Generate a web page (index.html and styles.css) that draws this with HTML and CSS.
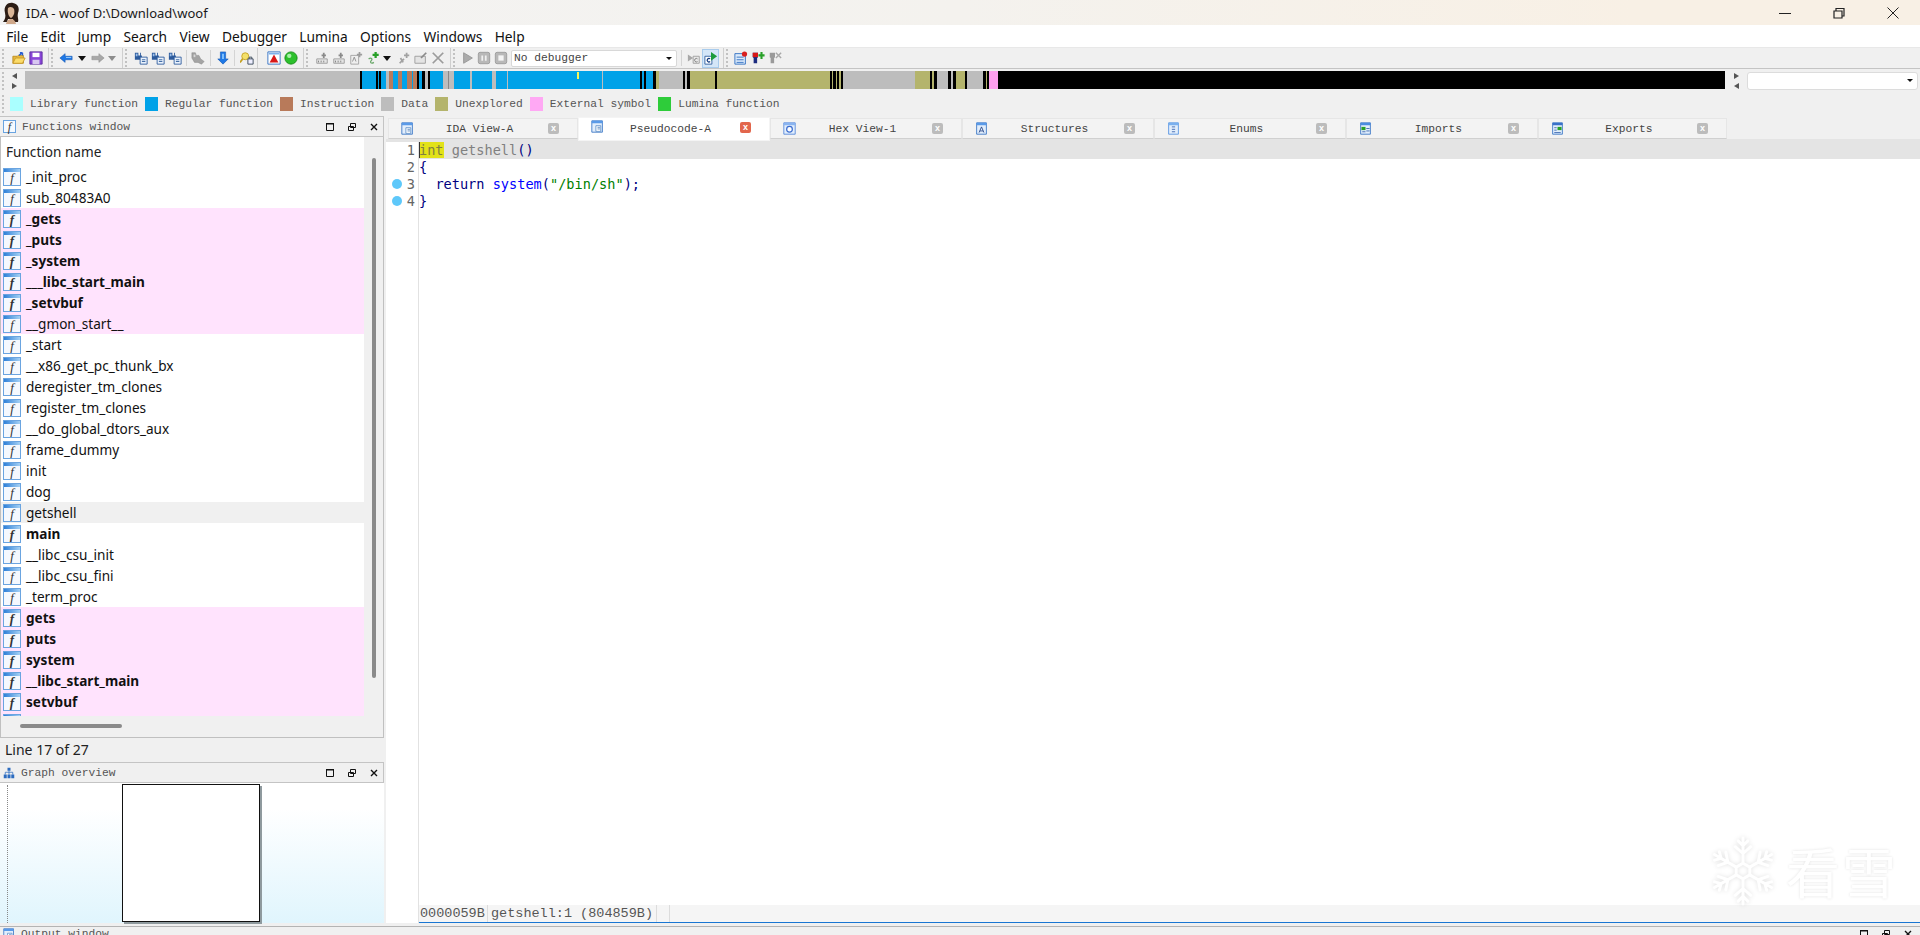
FILE: index.html
```html
<!DOCTYPE html>
<html lang="en">
<head>
    <meta charset="UTF-8">
    <title>IDA - woof D:\Download\woof</title>
    <link rel="stylesheet" href="styles.css">
</head>
<body>

<svg class="sprite" width="0" height="0">
    <defs>
        <symbol id="i-open" viewBox="0 0 16 16"><path d="M1 6h5l1-1h6v9H1z" fill="#e8b93c" stroke="#b98a1e"/><path d="M1 14l3-6h11l-3 6z" fill="#fbdc6a" stroke="#c8982a"/><path d="M8 5l4-3M12 2l-3 0M12 2l0 3" stroke="#2a5fd0" stroke-width="1.6" fill="none"/></symbol>
        <symbol id="i-save" viewBox="0 0 16 16"><path d="M1 1h14v14H1z" fill="#8a46d8" stroke="#5a2a9c"/><path d="M4 2h8v5H4z" fill="#fff"/><path d="M4 10h8v5H4z" fill="#d8c8f0"/></symbol>
        <symbol id="i-back" viewBox="0 0 16 16"><path d="M1 8l6-5v3h8v4H7v3z" fill="#1e78e6" stroke="#1250a8" stroke-width=".6"/><path d="M8 7h6v1H8z" fill="#9cd0ff"/></symbol>
        <symbol id="i-fwd" viewBox="0 0 16 16"><path d="M15 8l-6-5v3H1v4h8v3z" fill="#a8a8a8" stroke="#8c8c8c" stroke-width=".6"/></symbol>
        <symbol id="i-bino" viewBox="0 0 16 16"><path d="M1 2h4v3h2V2h1v3h1v5H1z" fill="#2c5a9c"/><path d="M2 3h2v3H2z" fill="#9cc0ec"/><path d="M7 7h8v8H7z" fill="#eaf2fc" stroke="#2c5a9c"/><path d="M9 10h4M9 12h4" stroke="#2c5a9c"/></symbol>
        <symbol id="i-bino-gray" viewBox="0 0 16 16"><path d="M1 2h4l1 3h3l2 4 4 3-3 3-4-2H4L1 8z" fill="#a4a4a4" stroke="#8a8a8a" stroke-width=".6"/><path d="M3 4h2v3H3z" fill="#d8d8d8"/></symbol>
        <symbol id="i-down" viewBox="0 0 16 16"><path d="M8 15l-6-6h3V1h6v8h3z" fill="#1e78e6" stroke="#1250a8" stroke-width=".6"/><path d="M7 3h2v6H7z" fill="#8cc8ff"/></symbol>
        <symbol id="i-lock" viewBox="0 0 16 16"><circle cx="6" cy="6" r="4" fill="#f4e06a" stroke="#c4a020"/><path d="M3 9L0 13" stroke="#c4a020" stroke-width="2"/><path d="M9 9h6v6H9z" fill="#eef" stroke="#345"/><path d="M10.500 9V7h3v2" fill="none" stroke="#345"/></symbol>
        <symbol id="i-graph" viewBox="0 0 16 16"><path d="M1 1h14v14H1z" fill="#fff" stroke="#2c6cc0"/><path d="M2 2h12v2H2z" fill="#7cb0ea"/><path d="M8 4l5 9H3z" fill="#d81818"/></symbol>
        <symbol id="i-green" viewBox="0 0 16 16"><circle cx="8" cy="8" r="7" fill="#2cc02c" stroke="#148a14"/><circle cx="6" cy="5.500" r="2.500" fill="#a8f0a8"/></symbol>
        <symbol id="i-gear" viewBox="0 0 16 16"><path d="M2 9h12v5H2z" fill="#e4e4e4" stroke="#9a9a9a"/><path d="M4 11v2M7 11v2M10 11v2" stroke="#7a7a7a"/><path d="M10 2v6M7.500 5h5" stroke="#8a8a8a" stroke-width="2"/></symbol>
        <symbol id="i-doc" viewBox="0 0 16 16"><path d="M2 5h9v10H2z" fill="#efefef" stroke="#a0a0a0"/><path d="M4 12l2-5 2 5" fill="none" stroke="#8a8a8a"/><path d="M12 1v6M9 4h6" stroke="#9c9c9c" stroke-width="2"/></symbol>
        <symbol id="i-plus" viewBox="0 0 16 16"><path d="M11 1v7M7.500 4.500h7" stroke="#28a028" stroke-width="2.600"/><path d="M3 9c3-2 5 0 3 2s0 4 3 2" fill="none" stroke="#6aa86a" stroke-width="1.400"/></symbol>
        <symbol id="i-asterisk" viewBox="0 0 16 16"><path d="M11 2v6M8 5l6 0M3 14l5-5M4 8l3 5" stroke="#a2a2a2" stroke-width="2"/></symbol>
        <symbol id="i-sheet" viewBox="0 0 16 16"><path d="M1 6h12v8H1z" fill="#e4e4e4" stroke="#9a9a9a"/><path d="M8 8l6-6" stroke="#8a8a8a" stroke-width="2"/></symbol>
        <symbol id="i-cross" viewBox="0 0 16 16"><path d="M2 2l12 12M14 2L2 14" stroke="#9c9c9c" stroke-width="2"/></symbol>
        <symbol id="i-play" viewBox="0 0 16 16"><path d="M3 2l10 6-10 6z" fill="#ababab" stroke="#969696"/></symbol>
        <symbol id="i-pause" viewBox="0 0 16 16"><rect x="1.500" y="1.500" width="13" height="13" rx="2" fill="#b8b8b8" stroke="#9a9a9a"/><path d="M6 5v6M10 5v6" stroke="#f0f0f0" stroke-width="2"/></symbol>
        <symbol id="i-stop" viewBox="0 0 16 16"><rect x="1.500" y="1.500" width="13" height="13" rx="2" fill="#b8b8b8" stroke="#9a9a9a"/><rect x="5" y="5" width="6" height="6" fill="#f4f4f4"/></symbol>
        <symbol id="i-step" viewBox="0 0 16 16"><path d="M1 4l6 4-6 4z" fill="#a8a8a8"/><path d="M7 6h7v8H7z" fill="#e8e8e8" stroke="#9c9c9c"/><path d="M12 9a2 2 0 1 0 0 3" fill="none" stroke="#777"/></symbol>
        <symbol id="i-run" viewBox="0 0 16 16"><path d="M1 6h8v9H1z" fill="#fff" stroke="#2c5a9c"/><path d="M7 9a2 2 0 1 0 0 3" fill="none" stroke="#123a80" stroke-width="1.400"/><path d="M8 1l7 5-7 5z" fill="#1c9c3c"/></symbol>
        <symbol id="i-list" viewBox="0 0 16 16"><path d="M1 3h12v12H1z" fill="#dceafa" stroke="#2c6cc0"/><path d="M3 7h8M3 10h8M3 13h8" stroke="#2c6cc0"/><circle cx="12" cy="3.500" r="3" fill="#d82020"/></symbol>
        <symbol id="i-chip" viewBox="0 0 16 16"><path d="M2 2h6v5l-1 1v6H3V8L2 7z" fill="#1c2c80"/><path d="M2 2h6v5H2z" fill="#d81818"/><path d="M12 1v8M8.500 5h7" stroke="#28a028" stroke-width="2.400"/></symbol>
        <symbol id="i-chip-off" viewBox="0 0 16 16"><path d="M2 2h6v5l-1 1v6H3V8L2 7z" fill="#9a9a9a"/><path d="M9 2l6 6M15 2L9 8" stroke="#a8a8a8" stroke-width="1.600"/></symbol>
        <symbol id="i-tree" viewBox="0 0 16 16"><path d="M6 1h4v4H6zM1 10h4v5H1zM6 10h4v5H6zM11 10h4v5h-4z" fill="#2c6cc0"/><path d="M8 5v5M3 10V7h10v3" fill="none" stroke="#2c6cc0"/></symbol>
        <symbol id="i-win" viewBox="0 0 16 16"><path d="M1 1h13v14H1z" fill="#e2eefc" stroke="#2c6cc0"/><path d="M1 1h13v3H1z" fill="#5a9ae8"/><path d="M6 7h6v7H6z" fill="#fff" stroke="#5a8cc8"/><path d="M8 9h3M8 11h3" stroke="#4a7cb8"/></symbol>
        <symbol id="i-hex" viewBox="0 0 16 16"><path d="M1 1h14v14H1z" fill="#e2eefc" stroke="#4a80d8"/><path d="M1 1h14v3H1z" fill="#8ab4f0"/><circle cx="8" cy="9" r="3.500" fill="#fff" stroke="#3a6cd0" stroke-width="1.500"/></symbol>
        <symbol id="i-struct" viewBox="0 0 16 16"><path d="M2 1h12v14H2z" fill="#e2eefc" stroke="#2c6cc0"/><path d="M2 1h12v3H2z" fill="#5a9ae8"/><path d="M5 13l3-7 3 7M6 11h4" fill="none" stroke="#1c3c80"/></symbol>
        <symbol id="i-enum" viewBox="0 0 16 16"><path d="M2 1h12v14H2z" fill="#e2eefc" stroke="#4a8ce0"/><path d="M2 1h12v3H2z" fill="#7ab0ee"/><path d="M6 6h4M6 9h4M6 12h4" stroke="#2c5aa8"/></symbol>
        <symbol id="i-import" viewBox="0 0 16 16"><path d="M2 1h12v14H2z" fill="#e2eefc" stroke="#2c6cc0"/><path d="M2 1h12v3H2z" fill="#4a8ce0"/><path d="M3 6h5v4H3z" fill="#28a028"/><path d="M9 8h4M9 11h4M4 12h4" stroke="#2c5aa8"/></symbol>
        <symbol id="i-export" viewBox="0 0 16 16"><path d="M2 1h12v14H2z" fill="#e2eefc" stroke="#2c6cc0"/><path d="M2 1h12v3H2z" fill="#3a70c8"/><path d="M8 6h5v4H8z" fill="#28a028"/><path d="M4 7h3M4 10h3M4 13h8" stroke="#2c5aa8"/></symbol>
        <symbol id="i-max" viewBox="0 0 8 8"><path d="M.5.5h7v7h-7z" fill="none" stroke="#111"/><path d="M0 0h8v1.500H0z" fill="#111"/></symbol>
        <symbol id="i-float" viewBox="0 0 8 8"><path d="M2.500.5h5v4h-5zM.5 3.500h5v4h-5z" fill="#f0f0f0" stroke="#111"/></symbol>
        <symbol id="i-shut" viewBox="0 0 8 8"><path d="M1 1l6 6M7 1L1 7" stroke="#111" stroke-width="1.400"/></symbol>
    </defs>
</svg>

<div class="app">

    <header class="titlebar">
        <svg class="portrait" viewBox="0 0 18 22"><path d="M3 11C1 3 7 0 11 1c5 1 7 5 5 10-1 4 1 6 0 9H10l1-3H6l-1 3H1c2-3 3-5 2-9z" fill="#2c1c14"/><path d="M6 6c2-2 5-1 6 1 1 3 0 7-3 9-2-1-4-5-3-10z" fill="#d9b596"/><path d="M4 22c1-4 3-5 5-5s4 1 5 5z" fill="#cfa88a"/></svg>
        <span class="title-text">IDA - woof D:\Download\woof</span>
        <div class="win-buttons">
            <svg viewBox="0 0 12 12"><path d="M0 6.500h12" stroke="#222"/></svg>
            <svg viewBox="0 0 12 12"><path d="M1 4h8v7H1zM3 4V1.500h8V9H9" fill="none" stroke="#222" stroke-width="1.200"/></svg>
            <svg viewBox="0 0 12 12"><path d="M.5.500l11 11M11.500.500l-11 11" stroke="#222"/></svg>
        </div>
    </header>

    <nav class="menubar">
        <span>File</span><span>Edit</span><span>Jump</span><span>Search</span><span>View</span><span>Debugger</span><span>Lumina</span><span>Options</span><span>Windows</span><span>Help</span>
    </nav>

    <div class="toolbar">
        <span class="tb-grip"></span>
        <span class="tb"><svg><use href="#i-open"/></svg></span>
        <span class="tb"><svg><use href="#i-save"/></svg></span>
        <span class="tb-break"></span>
        <span class="tb tb-16"><svg><use href="#i-back"/></svg></span>
        <span class="tb tb-16"><i class="caret"></i></span>
        <span class="tb tb-16"><svg><use href="#i-fwd"/></svg></span>
        <span class="tb tb-12"><i class="caret caret-off"></i></span>
        <span class="tb-break"></span>
        <span class="tb"><svg><use href="#i-bino"/></svg></span>
        <span class="tb"><svg><use href="#i-bino"/></svg></span>
        <span class="tb"><svg><use href="#i-bino"/></svg></span>
        <span class="tb-thin"></span>
        <span class="tb"><svg><use href="#i-bino-gray"/></svg></span>
        <span class="tb-thin tb-thin-8"></span>
        <span class="tb"><svg><use href="#i-down"/></svg></span>
        <span class="tb-thin tb-thin-7"></span>
        <span class="tb"><svg><use href="#i-lock"/></svg></span>
        <span class="tb-line"></span>
        <span class="tb"><svg><use href="#i-graph"/></svg></span>
        <span class="tb"><svg><use href="#i-green"/></svg></span>
        <span class="tb-break"></span>
        <span class="tb"><svg><use href="#i-gear"/></svg></span>
        <span class="tb"><svg><use href="#i-gear"/></svg></span>
        <span class="tb"><svg><use href="#i-doc"/></svg></span>
        <span class="tb"><svg><use href="#i-plus"/></svg></span>
        <span class="tb tb-12"><i class="caret"></i></span>
        <span class="tb tb-gap"><svg><use href="#i-asterisk"/></svg></span>
        <span class="tb"><svg><use href="#i-sheet"/></svg></span>
        <span class="tb"><svg><use href="#i-cross"/></svg></span>
        <span class="tb-break tb-break-13"></span>
        <span class="tb"><svg><use href="#i-play"/></svg></span>
        <span class="tb tb-16"><svg><use href="#i-pause"/></svg></span>
        <span class="tb"><svg><use href="#i-stop"/></svg></span>
        <div class="debugger-select"><span>No debugger</span><i class="caret caret-small"></i></div>
        <span class="tb-thin tb-thin-8"></span>
        <span class="tb"><svg><use href="#i-step"/></svg></span>
        <span class="tb tb-on"><svg><use href="#i-run"/></svg></span>
        <span class="tb-break tb-break-13"></span>
        <span class="tb"><svg><use href="#i-list"/></svg></span>
        <span class="tb"><svg><use href="#i-chip"/></svg></span>
        <span class="tb"><svg><use href="#i-chip-off"/></svg></span>
    </div>

    <div class="nav-row">
        <span class="tb-grip"></span>
        <div class="nav-arrows">
            <i class="tri-left"></i>
            <i class="tri-right"></i>
        </div>
        <div class="nav-strip"><i class="nav-cursor"></i></div>
        <div class="nav-arrows nav-arrows-right">
            <i class="tri-right"></i>
            <i class="tri-left"></i>
        </div>
        <div class="nav-select"><i class="caret caret-small"></i></div>
    </div>

    <div class="legend">
        <span class="tb-grip"></span>
        <i class="swatch sw-lib"></i><span>Library function</span>
        <i class="swatch sw-reg"></i><span>Regular function</span>
        <i class="swatch sw-ins"></i><span>Instruction</span>
        <i class="swatch sw-data"></i><span>Data</span>
        <i class="swatch sw-unx"></i><span>Unexplored</span>
        <i class="swatch sw-ext"></i><span>External symbol</span>
        <i class="swatch sw-lum"></i><span>Lumina function</span>
    </div>

    <main class="workspace">
        <aside class="left-dock">
            <div class="pane-title">
                <i class="fn-icon fn-icon-small"></i>
                <span>Functions window</span>
                <div class="pane-buttons">
                    <svg><use href="#i-max"/></svg>
                    <svg><use href="#i-float"/></svg>
                    <svg><use href="#i-shut"/></svg>
                </div>
            </div>
            <div class="func-box">
                <div class="func-scroll">
                    <div class="func-list">
                        <div class="func-head">Function name</div>
                        <div class="func-viewport">
                            <div class="func"><i class="fn-icon"></i>_init_proc</div>
                            <div class="func"><i class="fn-icon"></i>sub_80483A0</div>
                            <div class="func ext bold"><i class="fn-icon"></i>_gets</div>
                            <div class="func ext bold"><i class="fn-icon"></i>_puts</div>
                            <div class="func ext bold"><i class="fn-icon"></i>_system</div>
                            <div class="func ext bold"><i class="fn-icon"></i>___libc_start_main</div>
                            <div class="func ext bold"><i class="fn-icon"></i>_setvbuf</div>
                            <div class="func ext"><i class="fn-icon"></i>__gmon_start__</div>
                            <div class="func"><i class="fn-icon"></i>_start</div>
                            <div class="func"><i class="fn-icon"></i>__x86_get_pc_thunk_bx</div>
                            <div class="func"><i class="fn-icon"></i>deregister_tm_clones</div>
                            <div class="func"><i class="fn-icon"></i>register_tm_clones</div>
                            <div class="func"><i class="fn-icon"></i>__do_global_dtors_aux</div>
                            <div class="func"><i class="fn-icon"></i>frame_dummy</div>
                            <div class="func"><i class="fn-icon"></i>init</div>
                            <div class="func"><i class="fn-icon"></i>dog</div>
                            <div class="func current"><i class="fn-icon"></i>getshell</div>
                            <div class="func bold"><i class="fn-icon"></i>main</div>
                            <div class="func"><i class="fn-icon"></i>__libc_csu_init</div>
                            <div class="func"><i class="fn-icon"></i>__libc_csu_fini</div>
                            <div class="func"><i class="fn-icon"></i>_term_proc</div>
                            <div class="func ext bold"><i class="fn-icon"></i>gets</div>
                            <div class="func ext bold"><i class="fn-icon"></i>puts</div>
                            <div class="func ext bold"><i class="fn-icon"></i>system</div>
                            <div class="func ext bold"><i class="fn-icon"></i>__libc_start_main</div>
                            <div class="func ext bold"><i class="fn-icon"></i>setvbuf</div>
                            <div class="func ext"><i class="fn-icon"></i></div>
                        </div>
                    </div>
                    <div class="v-scroll"><i></i></div>
                </div>
                <div class="h-scroll"><i></i></div>
            </div>
            <div class="line-status">Line 17 of 27</div>
            <div class="pane-title">
                <svg class="pane-icon"><use href="#i-tree"/></svg>
                <span>Graph overview</span>
                <div class="pane-buttons">
                    <svg><use href="#i-max"/></svg>
                    <svg><use href="#i-float"/></svg>
                    <svg><use href="#i-shut"/></svg>
                </div>
            </div>
            <div class="graph-overview">
                <div class="graph-page"></div>
            </div>
        </aside>

        <section class="views">
            <div class="tabs">
                <div class="tab"><svg><use href="#i-win"/></svg><span>IDA View-A</span><i class="tab-close">x</i></div>
                <div class="tab active"><svg><use href="#i-win"/></svg><span>Pseudocode-A</span><i class="tab-close">x</i></div>
                <div class="tab"><svg><use href="#i-hex"/></svg><span>Hex View-1</span><i class="tab-close">x</i></div>
                <div class="tab"><svg><use href="#i-struct"/></svg><span>Structures</span><i class="tab-close">x</i></div>
                <div class="tab"><svg><use href="#i-enum"/></svg><span>Enums</span><i class="tab-close">x</i></div>
                <div class="tab"><svg><use href="#i-import"/></svg><span>Imports</span><i class="tab-close">x</i></div>
                <div class="tab tab-last"><svg><use href="#i-export"/></svg><span>Exports</span><i class="tab-close">x</i></div>
            </div>
            <div class="editor">
                <div class="gutter">
                    <div class="gutter-line">1</div>
                    <div class="gutter-line">2</div>
                    <div class="gutter-line"><i class="dot"></i>3</div>
                    <div class="gutter-line"><i class="dot"></i>4</div>
                </div>
                <div class="code-col">
                    <div class="code">
                        <div class="code-line hl"><span class="kw-mark">int</span> <span class="dim">getshell</span><span class="punc">()</span></div>
                        <div class="code-line"><span class="punc">{</span></div>
                        <div class="code-line">  <span class="punc">return</span> <span class="call">system</span><span class="punc">(</span><span class="str">"/bin/sh"</span><span class="punc">);</span></div>
                        <div class="code-line"><span class="punc">}</span></div>
                    </div>
                    <div class="code-status">
                        <span class="cell-addr">0000059B</span>
                        <span class="cell-loc">getshell:1 (804859B)</span>
                        <span class="cell-end"></span>
                    </div>
                </div>
            </div>
        </section>
    </main>

    <footer class="output-title">
        <svg class="pane-icon"><use href="#i-win"/></svg>
        <span>Output window</span>
        <div class="pane-buttons">
            <svg><use href="#i-max"/></svg>
            <svg><use href="#i-float"/></svg>
            <svg><use href="#i-shut"/></svg>
        </div>
    </footer>

    <div class="watermark">
        <svg class="flake" viewBox="-36 -36 72 72">
            <defs>
                <g id="flake-arm">
                    <path d="M0-9V-34M0-18l-8-7M0-18l8-7M0-26l-5-5M0-26l5-5"/>
                </g>
            </defs>
            <g fill="none" stroke="#fff" stroke-width="3" stroke-linecap="round">
                <path d="M0-8l7 4v8l-7 4-7-4v-8z"/>
                <use href="#flake-arm"/>
                <use href="#flake-arm" transform="rotate(60)"/>
                <use href="#flake-arm" transform="rotate(120)"/>
                <use href="#flake-arm" transform="rotate(180)"/>
                <use href="#flake-arm" transform="rotate(240)"/>
                <use href="#flake-arm" transform="rotate(300)"/>
            </g>
        </svg>
        <span>看雪</span>
    </div>

</div>

</body>
</html>
```

FILE: styles.css
```css
* {
    box-sizing: border-box;
}
html, body {
    margin: 0;
    height: 100%;
    overflow: hidden;
}
body {
    font-family: "Noto Sans", "Open Sans", sans-serif;
    background-color: #f0f0f0;
    color: #111;
}
.sprite {
    display: none;
}
i {
    font-style: normal;
}
.app {
    position: relative;
    display: flex;
    flex-direction: column;
    width: 1920px;
    height: 935px;
    overflow: hidden;
}

/* title bar and menu */
.titlebar {
    display: flex;
    align-items: center;
    flex: none;
    height: 25px;
    padding-left: 2px;
    background: linear-gradient(90deg, #f3f3f3 0%, #f4f2ee 50%, #f8f0e5 85%);
}
.portrait {
    width: 18px;
    height: 22px;
}
.title-text {
    margin-left: 6px;
    font-size: 13px;
    color: #1a1a1a;
}
.win-buttons {
    display: flex;
    gap: 42px;
    margin-left: auto;
    margin-right: 21px;
}
.win-buttons svg {
    width: 12px;
    height: 12px;
}
.menubar {
    display: flex;
    flex: none;
    align-items: center;
    height: 22px;
    background: #fff;
    font-size: 13.750px;
}
.menubar span {
    padding: 0 6.200px;
}

/* toolbar */
.toolbar {
    display: flex;
    flex: none;
    align-items: center;
    height: 22px;
    padding-left: 2px;
    background: #f0f0f0;
    border-top: 1px solid #e8e8e8;
    border-bottom: 1px solid #c4c4c4;
}
.tb-grip {
    flex: none;
    width: 3px;
    height: 18px;
    margin-right: 5px;
    border-left: 2px dotted #c2c2c2;
}
.tb {
    display: flex;
    flex: none;
    align-items: center;
    justify-content: center;
    width: 17px;
    height: 19px;
}
.tb svg {
    width: 14px;
    height: 14px;
}
.tb-16 {
    width: 16px;
}
.tb-12 {
    width: 12px;
}
.tb-gap {
    margin-left: 2px;
}
.tb-on {
    background: #d4e6f8;
    border: 1px solid #a8cbec;
}
.tb-break {
    flex: none;
    width: 14px;
    height: 20px;
    padding-left: 4px;
    background: linear-gradient(#cfcfcf, #cfcfcf) 4px 0 / 1px 100% no-repeat;
}
.tb-break::after {
    content: "";
    display: block;
    width: 2px;
    height: 18px;
    margin: 1px 0 0 3px;
    border-left: 2px dotted #c2c2c2;
}
.tb-break-13 {
    width: 13px;
}
.tb-line {
    flex: none;
    width: 10px;
    height: 20px;
    background: linear-gradient(#cfcfcf, #cfcfcf) 2px 0 / 1px 100% no-repeat;
}
.tb-thin {
    flex: none;
    width: 6px;
    height: 16px;
    background: linear-gradient(#d4d4d4, #d4d4d4) 3px 0 / 1px 100% no-repeat;
}
.tb-thin-8 {
    width: 8px;
    background-position: 4px 0;
}
.tb-thin-7 {
    width: 7px;
}
.caret {
    display: block;
    width: 0;
    height: 0;
    border-left: 4.500px solid transparent;
    border-right: 4.500px solid transparent;
    border-top: 5px solid #111;
}
.caret-off {
    border-top-color: #8c8c8c;
}
.caret-small {
    border-left-width: 3px;
    border-right-width: 3px;
    border-top-width: 3px;
}
.debugger-select {
    display: flex;
    flex: none;
    align-items: center;
    justify-content: space-between;
    width: 166px;
    height: 17px;
    margin-left: 2px;
    padding: 0 4px 0 2px;
    background: #fff;
    border: 1px solid #d8d8d8;
    border-radius: 2px;
    font-family: "Liberation Mono", monospace;
    font-size: 11.250px;
    color: #444;
}

/* navigation band */
.nav-row {
    display: flex;
    flex: none;
    align-items: center;
    height: 23px;
    padding-left: 2px;
}
.nav-arrows {
    display: flex;
    flex: none;
    flex-direction: column;
    gap: 4px;
    width: 15px;
    padding-left: 2px;
}
.tri-left, .tri-right {
    display: block;
    width: 0;
    height: 0;
    border-top: 3.500px solid transparent;
    border-bottom: 3.500px solid transparent;
}
.tri-left {
    border-right: 5px solid #555;
}
.tri-right {
    border-left: 5px solid #555;
}
.nav-strip {
    --g: #bdbdbd;
    --b: #00a2e8;
    --k: #000;
    --r: #b87a5a;
    --o: #b4b46c;
    position: relative;
    flex: none;
    width: 1700px;
    height: 18px;
    margin-top: -1px;
    background: linear-gradient(90deg,
        var(--g) 0 335px, var(--k) 335px 337px, var(--b) 337px 351px, var(--k) 351px 353px,
        var(--b) 353px 354px, var(--k) 354px 356px, var(--b) 356px 361px, var(--g) 361px 364px,
        var(--r) 364px 368px, var(--b) 368px 373px, var(--r) 373px 377px, var(--b) 377px 382px,
        var(--r) 382px 387px, var(--b) 387px 388px, var(--r) 388px 392px, var(--k) 392px 394px,
        var(--b) 394px 397px, var(--k) 397px 400px, var(--g) 400px 403px, var(--k) 403px 405px,
        var(--b) 405px 418px, var(--g) 418px 423px, #888 423px 424px, var(--g) 424px 429px,
        var(--b) 429px 445px, var(--g) 445px 447px, var(--b) 447px 467px, var(--g) 467px 471px,
        var(--b) 471px 482px, var(--g) 482px 483px, var(--b) 483px 577px, var(--g) 577px 578px,
        var(--b) 578px 615px, var(--k) 615px 617px, var(--b) 617px 619px, var(--k) 619px 621px,
        var(--b) 621px 628px, var(--k) 628px 631px, var(--o) 631px 634px, var(--g) 634px 658px,
        var(--k) 658px 660px, var(--g) 660px 662px, var(--k) 662px 665px, var(--o) 665px 690px,
        var(--k) 690px 692px, var(--o) 692px 805px, var(--k) 805px 807px, var(--o) 807px 808px,
        var(--k) 808px 811px, var(--o) 811px 812px, var(--k) 812px 814px, var(--o) 814px 816px,
        var(--k) 816px 818px, var(--g) 818px 890px, var(--o) 890px 905px, var(--k) 905px 907px,
        var(--o) 907px 909px, var(--k) 909px 912px, var(--g) 912px 923px, var(--k) 923px 926px,
        var(--g) 926px 928px, var(--k) 928px 931px, var(--o) 931px 940px, var(--k) 940px 942px,
        var(--g) 942px 958px, var(--k) 958px 961px, var(--o) 961px 962px, var(--k) 962px 964px,
        #ff9ff0 964px 973px, var(--k) 973px);
}
.nav-cursor {
    position: absolute;
    left: 552px;
    top: 1px;
    width: 2px;
    height: 7px;
    background: #f6f65a;
}
.nav-arrows-right {
    width: 22px;
    padding-left: 9px;
}
.nav-select {
    display: flex;
    flex: none;
    align-items: center;
    justify-content: flex-end;
    width: 171px;
    height: 18px;
    padding-right: 4px;
    background: #fff;
    border: 1px solid #dcdcdc;
    border-radius: 3px;
}

/* legend */
.legend {
    display: flex;
    flex: none;
    align-items: center;
    height: 22px;
    padding: 1px 0 0 2px;
    font-family: "Liberation Mono", monospace;
    font-size: 11.250px;
    color: #555;
}
.swatch {
    flex: none;
    width: 13px;
    height: 14px;
    margin: 0 7px;
}
.tb-grip + .swatch {
    margin-left: 0;
}

.sw-lib { background: #aaffff; }
.sw-reg { background: #00a2e8; }
.sw-ins { background: #b87a5a; }
.sw-data { background: #bdbdbd; }
.sw-unx { background: #b4b46c; }
.sw-ext { background: #ffa8f4; }
.sw-lum { background: #2ecc3a; }

/* dock layout */
.workspace {
    display: flex;
    flex: none;
    height: 807px;
    margin-top: 2px;
}
.left-dock {
    display: flex;
    flex: none;
    flex-direction: column;
    width: 384px;
    margin-right: 2px;
}
.pane-title {
    display: flex;
    flex: none;
    align-items: center;
    height: 21px;
    padding-left: 3px;
    background: #f0f0f0;
    border: 1px solid #c4c4c4;
    border-left: 0;
    font-family: "Liberation Mono", monospace;
    font-size: 11.250px;
    color: #555;
}
.pane-title > span {
    margin-left: 6px;
}
.pane-icon {
    flex: none;
    width: 12px;
    height: 12px;
}
.pane-buttons {
    display: flex;
    gap: 14px;
    margin-left: auto;
    margin-right: 5px;
}
.pane-buttons svg {
    width: 8px;
    height: 8px;
}

/* functions list */
.fn-icon {
    display: block;
    flex: none;
    width: 18px;
    height: 18px;
    margin-right: 5px;
    background: linear-gradient(90deg, #2f80d8, #a4d0f4) 0 0 / 100% 3px no-repeat, #f4f8fe;
    border: 1px solid #6aa4e0;
    font-family: "Liberation Serif", serif;
    font-size: 13px;
    font-style: italic;
    line-height: 18px;
    text-align: center;
    color: #333;
}
.fn-icon::before {
    content: "f";
}
.fn-icon-small {
    width: 13px;
    height: 13px;
    margin-right: 0;
    background: #f6faff;
    font-size: 12px;
    line-height: 12px;
}
.func-box {
    display: flex;
    flex: none;
    flex-direction: column;
    height: 601px;
    background: #f0f0f0;
    border: 1px solid #c0c0c0;
    border-top: 0;
}
.func-scroll {
    display: flex;
    flex: 1;
    min-height: 0;
}
.func-list {
    display: flex;
    flex: 1;
    flex-direction: column;
    min-width: 0;
    background: #fff;
}
.func-head {
    flex: none;
    height: 29px;
    padding-left: 5px;
    font-size: 13.600px;
    line-height: 29px;
    color: #222;
}
.func-viewport {
    flex: 1;
    min-height: 0;
    overflow: hidden;
}
.func {
    display: flex;
    align-items: center;
    height: 21px;
    padding-left: 2px;
    font-size: 13.600px;
    white-space: nowrap;
}
.func.ext {
    background: #ffe3fd;
}
.func.bold {
    font-weight: 700;
}
.func.current {
    background: #f0f0f0;
}
.v-scroll {
    flex: none;
    width: 19px;
    padding: 21px 0 0 8px;
}
.v-scroll i {
    display: block;
    width: 4px;
    height: 520px;
    background: #8a8a8a;
    border-radius: 2px;
}
.h-scroll {
    flex: none;
    height: 21px;
    padding: 8px 0 0 19px;
}
.h-scroll i {
    display: block;
    width: 102px;
    height: 4px;
    background: #8a8a8a;
    border-radius: 2px;
}
.line-status {
    flex: none;
    height: 24px;
    padding-left: 5px;
    font-size: 14px;
    line-height: 23px;
    color: #222;
}
.graph-overview {
    position: relative;
    flex: 1;
    background: linear-gradient(#fff 0, #fff 18%, #e0f5fd 100%);
}
.graph-overview::before {
    content: "";
    position: absolute;
    left: 7px;
    top: 2px;
    bottom: 0;
    border-left: 1px dotted #888;
}
.graph-page {
    position: absolute;
    left: 122px;
    top: 1px;
    width: 138px;
    height: 138px;
    background: #fff;
    border: 1px solid #111;
    box-shadow: 2px 2px 0 #8f9a9e;
}

/* tabs */
.views {
    display: flex;
    flex: 1;
    flex-direction: column;
    min-width: 0;
}
.tabs {
    display: flex;
    flex: none;
    align-items: flex-start;
    height: 26px;
    padding: 2px 0 0 2px;
    background: linear-gradient(#f0f0f0 0 23px, #e4e4e4 23px);
    font-family: "Liberation Mono", monospace;
    font-size: 11.250px;
    color: #444;
}
.tab {
    position: relative;
    display: flex;
    flex: none;
    align-items: center;
    justify-content: center;
    width: 192px;
    height: 21px;
    padding-right: 7px;
    background: #f3f3f3;
    border: 1px solid #e6e6e6;
    border-bottom: 1px solid #d0d0d0;
}
.tab:first-child {
    width: 190px;
}
.tab-last {
    width: 189px;
}
.tab svg {
    position: absolute;
    left: 12px;
    top: 3px;
    width: 13px;
    height: 13px;
}
.tab.active {
    z-index: 1;
    height: 24px;
    margin-top: -1px;
    background: #fff;
    border-color: #f4f4f4;
}
.tab.active svg {
    top: 2px;
}
.tab-close {
    position: absolute;
    right: 18px;
    top: 4px;
    width: 11px;
    height: 11px;
    background: #bcbcbc;
    border-radius: 2px;
    font-family: "Liberation Sans", sans-serif;
    font-size: 9px;
    font-weight: 700;
    line-height: 10px;
    text-align: center;
    color: #fff;
}
.tab.active .tab-close {
    background: #e2664c;
}

/* pseudocode editor */
.editor {
    display: flex;
    flex: 1;
    min-height: 0;
    background: #fff;
    font-family: "DejaVu Sans Mono", monospace;
    font-size: 13.600px;
}
.gutter {
    flex: none;
    width: 33px;
    border-right: 1px solid #e2e2e2;
    color: #666;
}
.gutter-line {
    position: relative;
    height: 17px;
    padding-right: 3px;
    line-height: 17px;
    text-align: right;
}
.dot {
    position: absolute;
    left: 6px;
    top: 3px;
    width: 10px;
    height: 10px;
    background: #5ec8fa;
    border-radius: 50%;
}
.code-col {
    display: flex;
    flex: 1;
    flex-direction: column;
    min-width: 0;
}
.code {
    flex: 1;
}
.code-line {
    height: 17px;
    line-height: 17px;
    white-space: pre;
}
.code-line.hl {
    background: #e4e4e4;
}
.kw-mark {
    background: #e2e218;
    color: #808040;
    box-shadow: inset 1px 0 0 #333;
}
.dim {
    color: #808080;
}
.punc {
    color: #000080;
}
.call {
    color: #0000ff;
}
.str {
    color: #008000;
}
.code-status {
    display: flex;
    flex: none;
    align-items: center;
    height: 18px;
    background: #f5f5f5;
    border-bottom: 1px solid #1976d2;
    font-family: "Liberation Mono", monospace;
    font-size: 13.500px;
    color: #555;
}
.code-status span {
    height: 17px;
    line-height: 17px;
}
.cell-addr {
    width: 69px;
    padding-left: 1px;
    border-right: 1px solid #dcdcdc;
}
.cell-loc {
    width: 169px;
    padding-left: 3px;
    border-right: 1px solid #dcdcdc;
}
.cell-end {
    width: 13px;
    border-right: 1px solid #dcdcdc;
}

/* output pane, cut off by the window */
.output-title {
    display: flex;
    flex: none;
    height: 21px;
    margin-top: 3px;
    padding: 1px 0 0 3px;
    background: #f0f0f0;
    border-top: 1px solid #b4b4b4;
    font-family: "Liberation Mono", monospace;
    font-size: 11.250px;
    line-height: 13px;
    color: #555;
}
.output-title > span {
    margin-left: 6px;
}
.output-title .pane-buttons {
    margin-right: 8px;
    padding-top: 2px;
}

/* site mark over the corner */
.watermark {
    position: absolute;
    left: 1708px;
    top: 836px;
    display: flex;
    align-items: center;
    gap: 8px;
    font-family: "Noto Sans CJK SC", sans-serif;
    font-size: 54px;
    line-height: 68px;
    letter-spacing: 2px;
    color: #fff;
    text-shadow: 0 0 3px rgba(0, 0, 0, 0.12);
}
.flake {
    width: 70px;
    height: 70px;
    filter: drop-shadow(0 0 2px rgba(0, 0, 0, 0.12));
}
```
